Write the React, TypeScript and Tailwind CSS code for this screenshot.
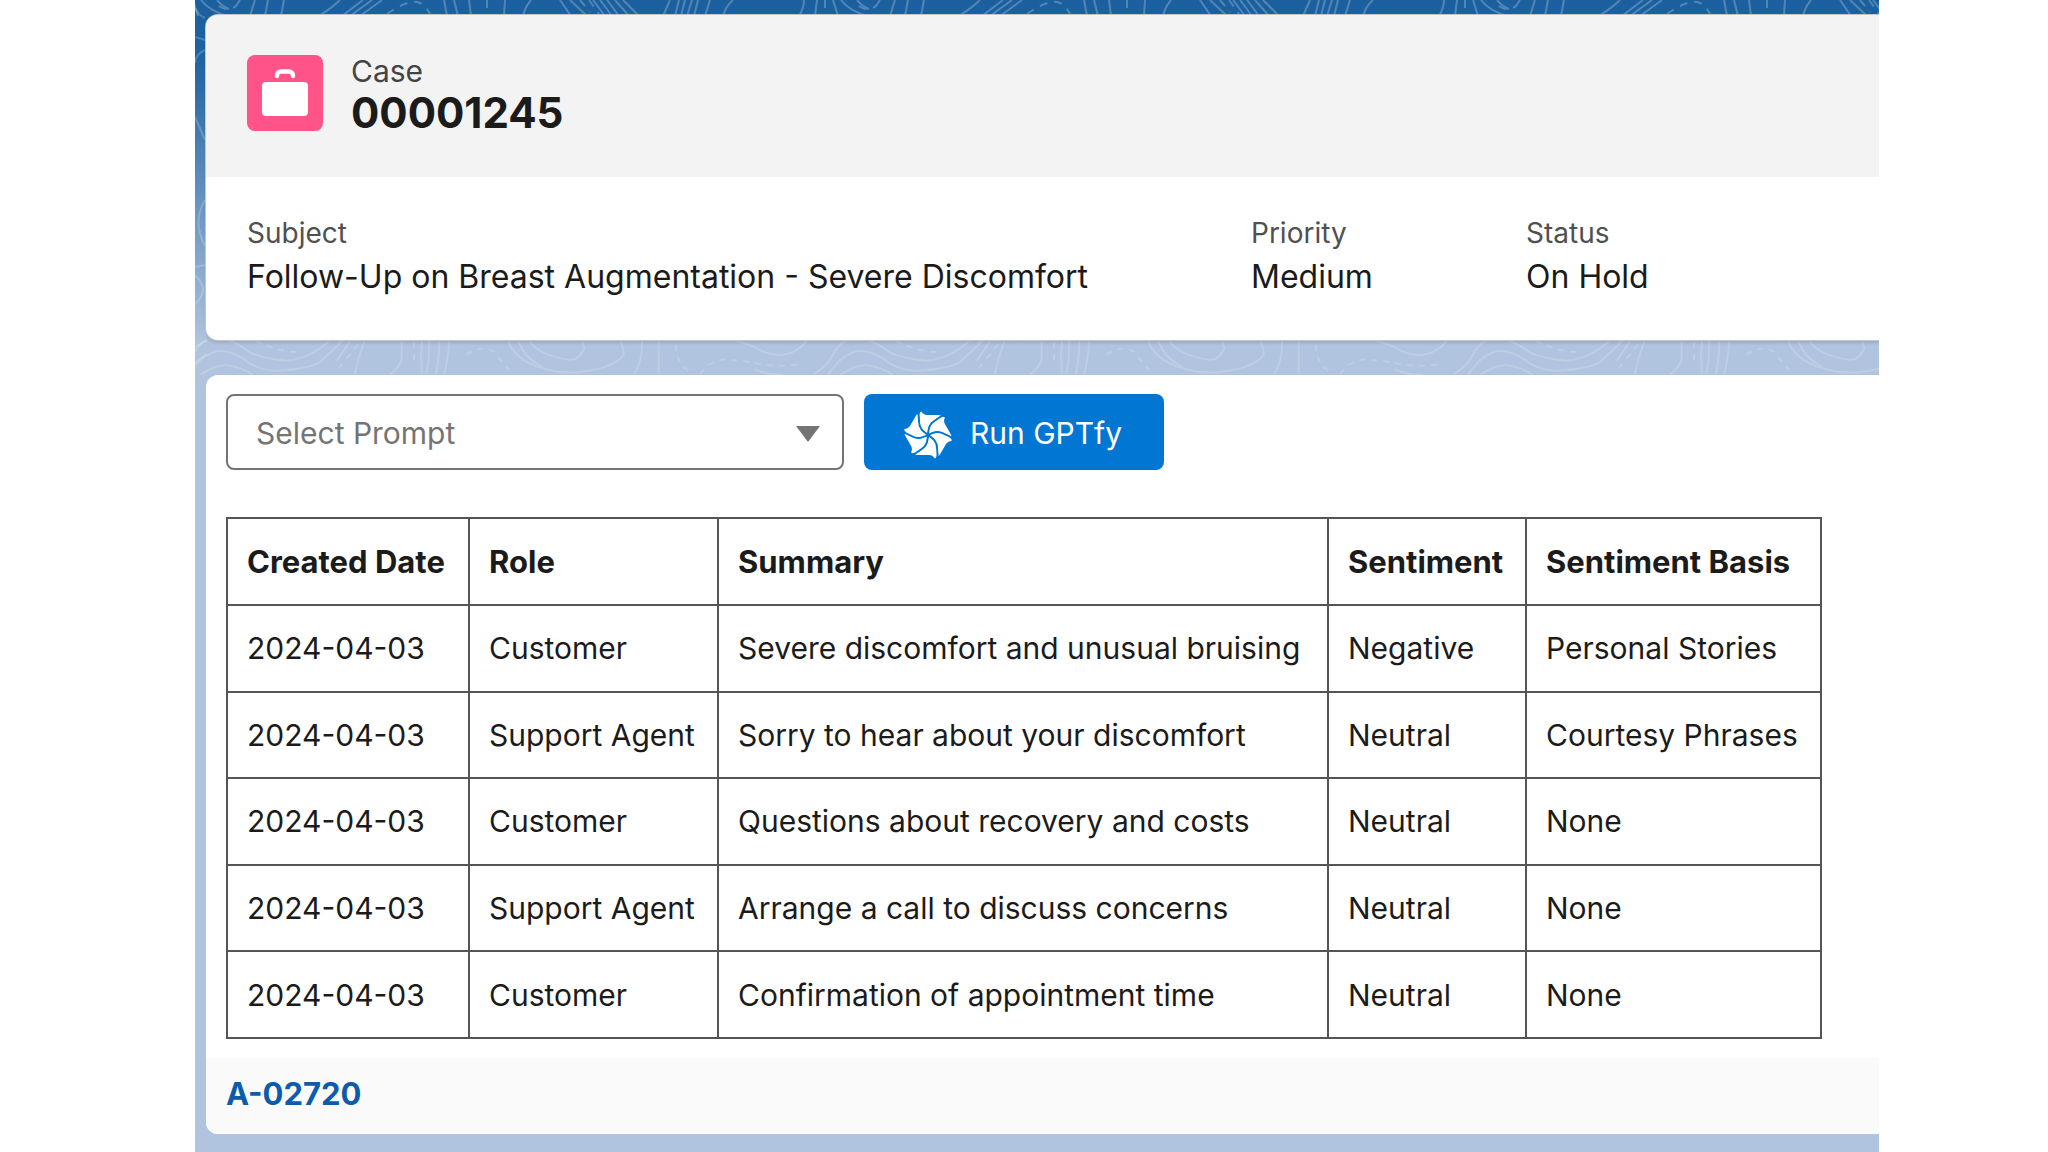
const columns = [
  { title: "Created Date", width: "w-[242px]" },
  { title: "Role", width: "w-[249px]" },
  { title: "Summary", width: "w-[610px]" },
  { title: "Sentiment", width: "w-[198px]" },
  { title: "Sentiment Basis", width: "w-[295px]" },
];

const rows = [
  ["2024-04-03", "Customer", "Severe discomfort and unusual bruising", "Negative", "Personal Stories"],
  ["2024-04-03", "Support Agent", "Sorry to hear about your discomfort", "Neutral", "Courtesy Phrases"],
  ["2024-04-03", "Customer", "Questions about recovery and costs", "Neutral", "None"],
  ["2024-04-03", "Support Agent", "Arrange a call to discuss concerns", "Neutral", "None"],
  ["2024-04-03", "Customer", "Confirmation of appointment time", "Neutral", "None"],
];

const fields = [
  { label: "Subject", value: "Follow-Up on Breast Augmentation - Severe Discomfort" },
  { label: "Priority", value: "Medium" },
  { label: "Status", value: "On Hold" },
];

// Contour lines of the page backdrop; the drawing repeats every 640px.
const topSolid =
  "M6 0Q15 12 34 16M22 0Q28 7 34 9M45 0L41 6M60 0L55 16M73 0L70 16M89 0L86 16M145 0Q138 7 124 16M168 0L147 16M177 0L155 16M187 0L165 16M249 0L252 16M259 0L263 16M274 0L276 16M310 0L309 16M336 0Q330 7 328 16M365 0L376 16M375 0L392 16M398 0L410 16M405 0L417 16M412 0L424 16M420 0L434 16M428 0L444 16M475 0L468 16M484 0L480 16M490 0L486 16M497 0L492 16M503 0L499 16M515 0L510 16M538 0Q531 6 528 16M609 0Q609 8 604 16M622 0L620 16M638 0L643 16";
const topDashed = "M24 6Q33 13 42 5M192 14Q212 0 222 2Q230 4 235 14M292 0V16M385 0L395 12M630 0V16M394 0L404 14";
const midSolid =
  "M0 28Q40 55 80 50T145 8M165 108Q190 95 210 65Q235 15 255 8M205 110Q240 50 290 38Q340 40 375 75Q410 98 450 98Q530 95 570 75Q610 40 635 8M240 110Q280 80 315 82Q360 90 385 110M320 8Q350 20 380 45Q430 65 480 68Q550 60 600 8M0 95Q40 112 75 110M660 8L620 70M700 8Q680 60 672 110M803 8V65Q795 90 770 110M860 8Q855 60 860 110M880 8Q882 60 872 110M908 8Q910 60 898 110M936 8Q934 60 922 110M1100 8Q1120 60 1180 85Q1240 108 1300 103Q1400 90 1425 50Q1425 30 1415 8M1130 8Q1145 60 1200 88M1160 8Q1185 50 1270 65Q1300 70 1315 30L1308 8M1475 8Q1480 60 1455 110M1523 8V110M1740 8Q1780 20 1792 28";
const midDashed =
  "M395 8Q460 45 520 42M838 12V80M985 50Q1020 20 1060 40L1110 105M0 75Q60 90 130 78M1570 20Q1575 90 1620 105M1640 108Q1670 60 1720 65T1792 75M680 20L620 100";
const leftSolid =
  "M0 8Q4 16 10 18M0 37L10 40M10 50Q1 54 0 63M0 117L10 140M10 200Q-3 222 10 246M0 267L10 265M0 275Q16 290 0 304M0 347L12 340M0 363L12 354";

function Backdrop() {
  return (
    <svg className="absolute inset-x-0 top-0 h-[375px] w-full" aria-hidden="true" fill="none" stroke="#fff" strokeWidth="2">
      <path d={leftSolid} opacity="0.2" />
      {[-640, 0, 640, 1280, 1920, 2560].map((x) => (
        <g key={x} transform={`translate(${x})`}>
          <g opacity="0.24">
            <path d={topSolid} />
            <path d={topDashed} strokeDasharray="8 7" />
          </g>
          <g opacity="0.16" transform="translate(560 338) scale(0.357 0.333)">
            <path d={midSolid} vectorEffect="non-scaling-stroke" />
            <path d={midDashed} vectorEffect="non-scaling-stroke" strokeDasharray="6 6" />
          </g>
        </g>
      ))}
    </svg>
  );
}

function CaseIcon() {
  return (
    <svg viewBox="0 0 76 76" className="size-[76px] shrink-0" aria-hidden="true">
      <rect width="76" height="76" rx="8" fill="#ff538a" />
      <rect x="15" y="27" width="46" height="34" rx="4" fill="#fff" />
      <path d="M30 21v-.5a4 4 0 0 1 4-4h8a4 4 0 0 1 4 4v.5" fill="none" stroke="#fff" strokeWidth="4.4" strokeLinecap="round" />
    </svg>
  );
}

function GptfyLogo() {
  return (
    <svg viewBox="-24 -24 48 48" className="mt-1 size-12" aria-hidden="true">
      {[0, 60, 120, 180, 240, 300].map((a) => (
        <path
          key={a}
          transform={`rotate(${a})`}
          d="M0 0C-4 -3 -9 -6 -9 -13L-9.5 -20Q-9 -25 -6 -24Q-4 -21 -1 -21L11 -21Q15 -20.5 12.6 -18.2L6.8 -14.3C.7 -10.8 .6 -5 0 0Z"
          fill="#fff"
          stroke="#0176d3"
          strokeWidth="1.8"
        />
      ))}
    </svg>
  );
}

export default function App() {
  return (
    <div className="min-h-screen bg-white pr-[169px] pl-[195px] font-['Inter',sans-serif] text-[#1b1b1b]">
      <main className="relative flex min-h-screen flex-col gap-[35px] overflow-hidden bg-[#b0c4df] bg-[linear-gradient(to_bottom,#1b5f9e_0px,#1f63a1_60px,#b0c4df_345px)] pt-[15px] pb-4 pl-[11px]">
        <Backdrop />
        <header className="relative overflow-hidden rounded-l-xl bg-white shadow-[0_0_0_1px_#c4c6ca,0_3px_3px_rgba(0,0,0,0.12)]">
          <div className="flex h-[162px] gap-7 bg-[#f3f3f3] pt-10 pl-[41px]">
            <CaseIcon />
            <div className="-mt-0.5">
              <p className="text-[30px] leading-9 text-[#444]">Case</p>
              <h1 className="text-[42px] leading-12 font-bold">00001245</h1>
            </div>
          </div>
          <dl className="grid h-[163px] grid-cols-[1004fr_275fr_353fr] pt-9 pl-[41px]">
            {fields.map((f) => (
              <div key={f.label}>
                <dt className="text-[28px] leading-10 text-[#505050]">{f.label}</dt>
                <dd className="text-[32px] leading-12">{f.value}</dd>
              </div>
            ))}
          </dl>
        </header>

        <section className="relative overflow-hidden rounded-l-xl bg-white">
          <div className="flex gap-5 px-5 pt-[19px]">
            <div className="relative w-[618px]">
              <select
                aria-label="Select Prompt"
                className="h-[76px] w-full appearance-none rounded-lg border-2 border-[#747474] bg-white pt-0.5 pr-16 pl-7 text-[30px] text-[#747474]"
              >
                <option>Select Prompt</option>
              </select>
              <svg viewBox="0 0 24 16" className="pointer-events-none absolute top-8 right-6 h-4 w-6" aria-hidden="true">
                <path d="M0 0H24L12 16Z" fill="#747474" />
              </svg>
            </div>
            <button type="button" className="flex h-[76px] w-[300px] items-center gap-[18px] rounded-lg bg-[#0176d3] pt-0.5 pl-10 text-[30px] text-white">
              <GptfyLogo />
              Run GPTfy
            </button>
          </div>

          <table className="mx-5 mt-[47px] mb-[19px] h-[522px] border-collapse text-left text-[30px] leading-10">
            <thead>
              <tr className="h-[87px]">
                {columns.map((c) => (
                  <th key={c.title} className={`${c.width} border-2 border-[#555] px-[19px] text-[31px] font-bold whitespace-nowrap`}>
                    {c.title}
                  </th>
                ))}
              </tr>
            </thead>
            <tbody>
              {rows.map((r, i) => (
                <tr key={i} className="h-[86px]">
                  {r.map((cell, j) => (
                    <td key={j} className="border-2 border-[#555] px-[19px] whitespace-nowrap">
                      {cell}
                    </td>
                  ))}
                </tr>
              ))}
            </tbody>
          </table>

          <footer className="flex h-[76px] items-center bg-[#fafafa] px-5 pb-1">
            <a href="#A-02720" className="text-[31px] leading-10 font-bold text-[#0b5cab]">
              A-02720
            </a>
          </footer>
        </section>
      </main>
    </div>
  );
}
